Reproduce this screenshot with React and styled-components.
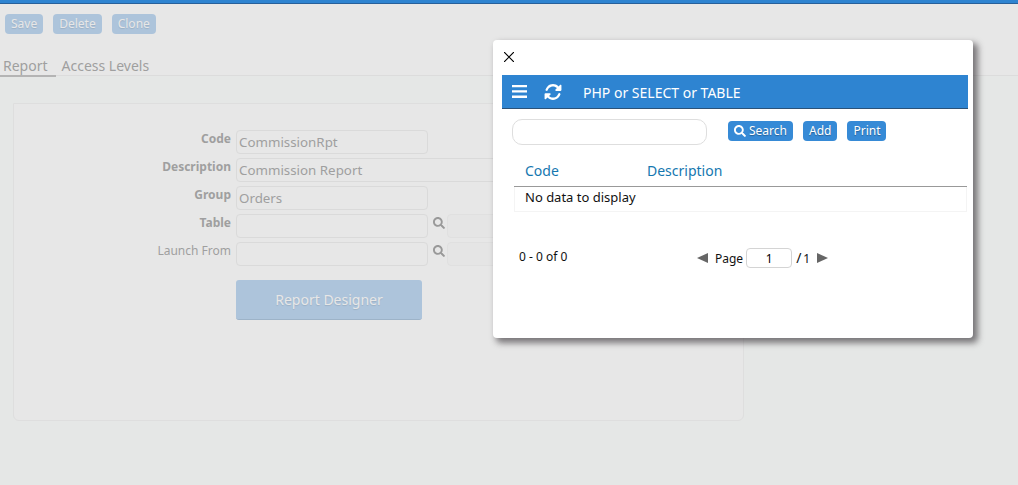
import React from "react"
import styled, { createGlobalStyle } from "styled-components"
import { FaSearch } from "react-icons/fa"
import { FaRotate } from "react-icons/fa6"

const GlobalStyle = createGlobalStyle`
  * {
    box-sizing: border-box;
  }
  body {
    margin: 0;
    background-color: #e5e7e6;
    font-family: "Noto Sans", sans-serif;
    font-size: 12px;
    color: #111;
  }
  button,
  input {
    font-family: inherit;
  }
`

const Page = styled.div`
  min-height: 100vh;
  border-top: 3px solid #2e84d1;
`

const PageHeader = styled.header`
  background-color: #e7e7e7;
  border-top: 1px solid #27609a;
  border-bottom: 1px solid #dcdcdc;
`

const Toolbar = styled.div`
  display: flex;
  gap: 10px;
  padding: 10px 5px 0;
`

const Button = styled.button`
  display: flex;
  align-items: center;
  gap: 3px;
  height: 20px;
  padding: 0 6px;
  border: 0;
  border-radius: 4px;
  background-color: ${({ $faded }) => ($faded ? "#adc4db" : "#368ad6")};
  color: ${({ $faded }) => ($faded ? "#e7e7e7" : "#fff")};
  font-size: 12px;
  line-height: 18px;
  text-shadow: 0 1px 1px rgba(0, 0, 0, ${({ $faded }) => ($faded ? 0.1 : 0.3)});
`

const Tabs = styled.nav`
  display: flex;
  gap: 3px;
  padding-top: 22px;
`

const Tab = styled.a`
  height: 21px;
  margin-bottom: -2px;
  padding: 0 8px 0 3px;
  border-bottom: 2px solid ${({ $active }) => ($active ? "#b4b4b4" : "transparent")};
  color: #9f9f9f;
  font-size: 14px;
  line-height: 19px;
  text-decoration: none;
`

const Panel = styled.form`
  max-width: 731px;
  min-height: 318px;
  margin: 27px 13px 0;
  padding: 26px 0;
  border: 1px solid #dedede;
  border-radius: 0 0 6px 6px;
  background-color: #e7e7e7;
`

const FieldRow = styled.div`
  display: grid;
  grid-template-columns: 217px 1fr;
  column-gap: 5px;
  margin-bottom: 4px;
`

const Label = styled.label`
  color: #9f9f9f;
  font-size: 12px;
  font-weight: ${({ $bold }) => ($bold ? 700 : 400)};
  line-height: 18px;
  text-align: right;
`

const Control = styled.div`
  display: flex;
`

const Field = styled.input`
  width: ${({ $wide }) => ($wide ? "400px" : "192px")};
  height: 24px;
  padding: 0 2px;
  border: 1px solid ${({ $soft }) => ($soft ? "#e0e0e0" : "#dadada")};
  border-radius: 4px;
  background-color: ${({ $soft }) => ($soft ? "#e5e5e5" : "transparent")};
  color: #9f9f9f;
`

const LookupButton = styled.button`
  display: flex;
  align-items: flex-start;
  padding: 3px 2px 0 5px;
  border: 0;
  background: none;
  color: #999;
  font-size: 12px;
`

const DesignerButton = styled.button`
  width: 186px;
  height: 40px;
  margin: 10px 0 0 222px;
  border: 0;
  border-bottom: 1px solid #9db3c8;
  border-radius: 3px;
  background-color: #adc4db;
  color: #e7e7e7;
  font-size: 14px;
  text-shadow: 0 1px 1px rgba(0, 0, 0, 0.1);
`

const Modal = styled.section`
  position: absolute;
  top: 40px;
  right: 45px;
  width: 480px;
  padding: 0 5px 70px 9px;
  border-radius: 4px;
  background-color: #fff;
  box-shadow: 4px 4px 6px 1px rgba(50, 45, 50, 0.6);
`

const CloseButton = styled.button`
  display: flex;
  align-items: center;
  height: 35px;
  padding: 0 2px 2px;
  border: 0;
  background: none;
  color: #000;
`

const ModalHeader = styled.header`
  display: flex;
  align-items: center;
  height: 34px;
  padding: 0 10px;
  border-bottom: 1px solid #2b5278;
  background-color: #2e84d1;
  color: #fff;
  h2 {
    margin: 2px 0 0;
    font-size: 14px;
    font-weight: 400;
  }
`

const IconButton = styled.button`
  display: flex;
  padding: 0;
  margin-right: ${({ $gap }) => $gap};
  border: 0;
  background: none;
  color: #fff;
`

const SearchBar = styled.div`
  display: flex;
  gap: 10px;
  padding: 10px 10px 0;
  ${Button} {
    margin-top: 2px;
  }
`

const SearchField = styled.input`
  width: 195px;
  height: 26px;
  margin-right: 11px;
  padding: 0 10px;
  border: 1px solid #dedede;
  border-radius: 10px;
  background-color: #fff;
`

const Table = styled.table`
  width: calc(100% - 13px);
  margin: 9px 0 0 12px;
  border-collapse: separate;
  border-spacing: 0;
  text-align: left;
  th {
    height: 33px;
    padding: 0 11px;
    border-bottom: 1px solid #999;
    color: #1577b0;
    font-size: 14px;
    font-weight: 400;
  }
  th:first-child {
    width: 122px;
  }
  td {
    height: 25px;
    padding: 0 10px 4px;
    border: 1px solid #f4f4f4;
    border-top: 0;
    font-size: 13px;
    line-height: 18px;
  }
`

const Footer = styled.footer`
  display: grid;
  grid-template-columns: 178px 1fr;
  align-items: center;
  padding: 36px 0 0 17px;
`

const Count = styled.span`
  margin-bottom: 3px;
`

const Pager = styled.div`
  display: flex;
  align-items: center;
`

const ArrowButton = styled.button`
  display: flex;
  padding: 0;
  margin: ${({ $next }) => ($next ? "0 0 0 7px" : "0 7px 0 0")};
  border: 0;
  background: none;
  color: #666;
`

const PageField = styled.input`
  width: 46px;
  height: 20px;
  margin: 0 4px 0 3px;
  padding: 0;
  border: 1px solid #d4d4d4;
  border-radius: 4px;
  font-size: 12px;
  text-align: center;
`

const Slash = styled.span`
  margin-right: 2px;
  font-size: 14px;
  line-height: 18px;
`

const fields = [
  { id: "code", label: "Code", value: "CommissionRpt", bold: true },
  { id: "description", label: "Description", value: "Commission Report", bold: true, wide: true },
  { id: "group", label: "Group", value: "Orders", bold: true },
  { id: "table", label: "Table", value: "", bold: true, lookup: true },
  { id: "launchFrom", label: "Launch From", value: "", lookup: true },
]

const FormField = ({ id, label, value, bold, wide, lookup }) => (
  <FieldRow>
    <Label htmlFor={id} $bold={bold}>
      {label}
    </Label>
    <Control>
      <Field id={id} defaultValue={value} $wide={wide} />
      {lookup && (
        <>
          <LookupButton type="button" aria-label={`Find ${label}`}>
            <FaSearch />
          </LookupButton>
          <Field $soft readOnly aria-label={`${label} name`} />
        </>
      )}
    </Control>
  </FieldRow>
)

const LookupModal = () => (
  <Modal role="dialog" aria-labelledby="lookup-title">
    <CloseButton aria-label="Close">
      <svg width="10" height="10" viewBox="0 0 10 10" stroke="currentColor" strokeWidth="1.2">
        <path d="M0 0L10 10M10 0L0 10" />
      </svg>
    </CloseButton>
    <ModalHeader>
      <IconButton $gap="17px" aria-label="Menu">
        <svg width="15" height="13" viewBox="0 0 15 13" fill="currentColor">
          <path d="M0 0h15v2.3H0zM0 5.3h15v2.3H0zM0 10.6h15v2.3H0z" />
        </svg>
      </IconButton>
      <IconButton $gap="21px" aria-label="Refresh">
        <FaRotate size={18} />
      </IconButton>
      <h2 id="lookup-title">PHP or SELECT or TABLE</h2>
    </ModalHeader>
    <SearchBar>
      <SearchField aria-label="Search text" />
      <Button>
        <FaSearch />
        Search
      </Button>
      <Button>Add</Button>
      <Button>Print</Button>
    </SearchBar>
    <Table>
      <thead>
        <tr>
          <th>Code</th>
          <th>Description</th>
        </tr>
      </thead>
      <tbody>
        <tr>
          <td colSpan="2">No data to display</td>
        </tr>
      </tbody>
    </Table>
    <Footer>
      <Count>0 - 0 of 0</Count>
      <Pager>
        <ArrowButton aria-label="Previous page">
          <svg width="11" height="10" viewBox="0 0 11 10" fill="currentColor">
            <path d="M0 5L11 0V10Z" />
          </svg>
        </ArrowButton>
        <label htmlFor="page">Page</label>
        <PageField id="page" defaultValue="1" />
        <Slash>/</Slash>
        <span>1</span>
        <ArrowButton $next aria-label="Next page">
          <svg width="11" height="10" viewBox="0 0 11 10" fill="currentColor">
            <path d="M11 5L0 0V10Z" />
          </svg>
        </ArrowButton>
      </Pager>
    </Footer>
  </Modal>
)

const App = () => {
  return (
    <Page>
      <GlobalStyle />
      <PageHeader>
        <Toolbar>
          <Button $faded>Save</Button>
          <Button $faded>Delete</Button>
          <Button $faded>Clone</Button>
        </Toolbar>
        <Tabs>
          <Tab href="#report" $active>
            Report
          </Tab>
          <Tab href="#access">Access Levels</Tab>
        </Tabs>
      </PageHeader>
      <Panel>
        {fields.map(field => (
          <FormField key={field.id} {...field} />
        ))}
        <DesignerButton type="button">Report Designer</DesignerButton>
      </Panel>
      <LookupModal />
    </Page>
  )
}

export default App
